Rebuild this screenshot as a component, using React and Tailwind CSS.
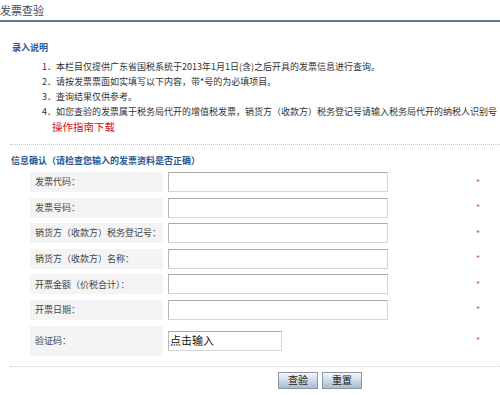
import React from "react";

const F = { fontFamily: '"Noto Sans CJK SC", "Noto Sans", sans-serif' };

const rows = [
  "发票代码：",
  "发票号码：",
  "销货方（收款方）税务登记号：",
  "销货方（收款方）名称：",
  "开票金额（价税合计）：",
  "开票日期：",
];

function Star() {
  return (
    <span className="ml-[88px] text-[9px] leading-none text-[#d05a5a]">*</span>
  );
}

export default function App() {
  return (
    <div
      className="w-[500px] h-[395px] bg-white overflow-hidden flex flex-col text-[#333]"
      style={F}
    >
      <div className="h-[22px] flex items-center border-b-2 border-[#5d7892] text-[11px] text-[#3a4a5c] whitespace-nowrap">
        发票查验
      </div>

      <div className="mt-[18px] pl-[12px] text-[9px] leading-[15px] font-bold text-[#2a5894]">
        录入说明
      </div>

      <div className="mt-[4px] pl-[42px] text-[9px] leading-[15px] text-[#333] whitespace-nowrap">
        <div>1．本栏目仅提供广东省国税系统于2013年1月1日(含)之后开具的发票信息进行查询。</div>
        <div>2．请按发票票面如实填写以下内容，带*号的为必填项目。</div>
        <div>3．查询结果仅供参考。</div>
        <div>4．如您查验的发票属于税务局代开的增值税发票，销货方（收款方）税务登记号请输入税务局代开的纳税人识别号</div>
        <div className="pl-[10px] text-[10.5px] text-[#cc1111]">操作指南下载</div>
      </div>

      <div className="mt-[10px] ml-[10px] border-t border-dotted border-[#c8c8c8]" />

      <div className="mt-[8px] pl-[11px] text-[9px] leading-[15px] font-bold text-[#2a5894] whitespace-nowrap">
        信息确认（请检查您输入的发票资料是否正确）
      </div>

      <div className="mt-[4px] flex flex-col gap-[5.6px]">
        {rows.map((r) => (
          <div key={r} className="flex items-center pl-[30px] h-[20px]">
            <div className="w-[133px] h-full bg-[#f4f4f4] flex items-center pl-[5px] text-[9px] text-[#444] whitespace-nowrap">
              {r}
            </div>
            <div className="ml-[5px] w-[220px] h-[20px] border border-[#d6d6d6] border-t-[#a8a8a8] border-l-[#b8b8b8] bg-white" />
            <Star />
          </div>
        ))}
        <div className="flex items-center pl-[30px] h-[30px]">
          <div className="w-[133px] h-full bg-[#f4f4f4] flex items-center pl-[5px] text-[9px] text-[#444] whitespace-nowrap">
            验证码：
          </div>
          <div className="ml-[5px] w-[114px] h-[20px] border border-[#d6d6d6] border-t-[#a8a8a8] border-l-[#b8b8b8] bg-white flex items-center pl-[1px] text-[11px] text-[#111] whitespace-nowrap">
            点击输入
          </div>
          <span className="ml-[194px] text-[9px] leading-none text-[#d05a5a]">*</span>
        </div>
      </div>

      <div className="mt-[10px] ml-[10px] border-t border-dotted border-[#c8c8c8]" />

      <div className="mt-[5px] pl-[278px] flex gap-[4px]">
        <button className="w-[40px] h-[17px] border border-[#8a96a6] bg-gradient-to-b from-[#f6f8fb] to-[#a7bbd4] text-[10px] leading-none text-[#222] flex items-center justify-center">
          查验
        </button>
        <button className="w-[40px] h-[17px] border border-[#8a96a6] bg-gradient-to-b from-[#f6f8fb] to-[#a7bbd4] text-[10px] leading-none text-[#222] flex items-center justify-center">
          重置
        </button>
      </div>
    </div>
  );
}
